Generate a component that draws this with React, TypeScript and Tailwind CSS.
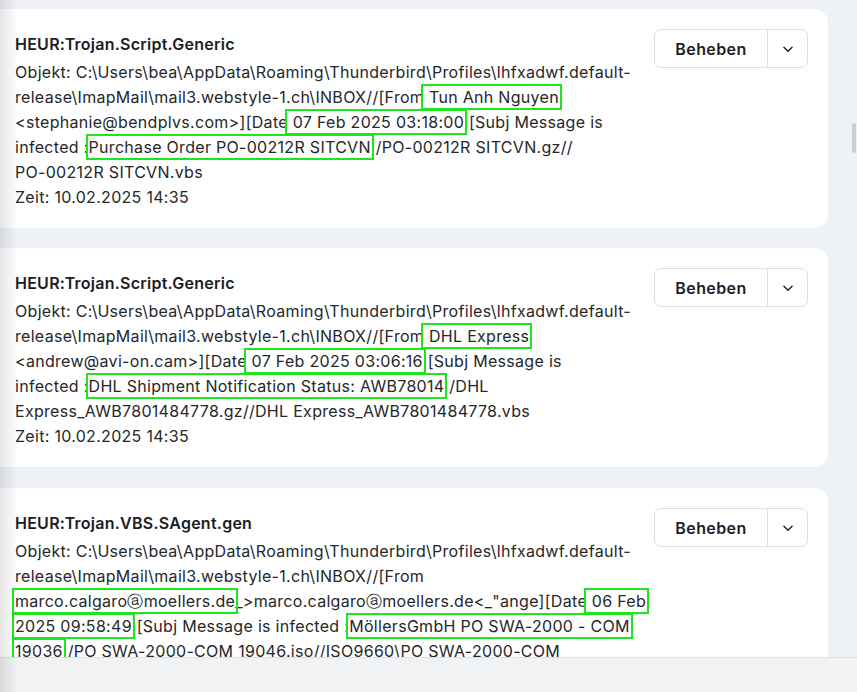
import React from "react";

const Box = ({ children }: { children: React.ReactNode }) => (
  <span className="outline-2 outline-[#1ee61e] outline-offset-[1px]">{children}</span>
);

const Chevron = () => (
  <svg width="14" height="14" viewBox="0 0 24 24" fill="none" stroke="#1f2124" strokeWidth="2.4" strokeLinecap="round" strokeLinejoin="round">
    <path d="M5 9l7 7 7-7" />
  </svg>
);

const Card = ({ title, lines, mt }: { title: string; lines: React.ReactNode[]; mt: string }) => (
  <div className={`${mt} w-[828px] bg-white rounded-r-[14px] flex`}>
    <div className="flex-1 pl-[15px] pt-[23px] pb-[18px]">
      <div className="text-[16px] leading-[24px] font-semibold tracking-[0.25px] text-[#1c1d1f]">{title}</div>
      <div className="mt-[4px] text-[16px] leading-[25px] tracking-[0.3px] text-[#25272a]">
        {lines.map((l, i) => (
          <div key={i} className="whitespace-nowrap">{l}</div>
        ))}
      </div>
    </div>
    <div className="pt-[20px] pr-[20px]">
      <div className="flex h-[39px] w-[154px] border border-[#dcdfe4] rounded-[7px]">
        <div className="w-[113px] flex items-center justify-center text-[16px] font-semibold tracking-[0.4px] text-[#1c1d1f] border-r border-[#dcdfe4]">
          Beheben
        </div>
        <div className="flex-1 flex items-center justify-center">
          <Chevron />
        </div>
      </div>
    </div>
  </div>
);

const objekt = "Objekt: C:\\Users\\bea\\AppData\\Roaming\\Thunderbird\\Profiles\\lhfxadwf.default-";
const release = "release\\ImapMail\\mail3.webstyle-1.ch\\INBOX//[From";

export default function App() {
  return (
    <div
      className="relative w-[857px] h-[692px] overflow-hidden bg-[#eef1f6] flex flex-col"
      style={{ fontFamily: "Inter, 'Noto Sans', sans-serif" }}
    >
      <div className="flex-1 flex overflow-hidden">
        <div className="w-[828px] pt-[9px]">
          <Card
            mt="mt-0"
            title="HEUR:Trojan.Script.Generic"
            lines={[
              objekt,
              <>{release}<Box> Tun Anh Nguyen  </Box></>,
              <>{"<stephanie@bendplvs.com>][Date"}<Box> 07 Feb 2025 03:18:00</Box>{" [Subj Message is"}</>,
              <>{"infected :"}<Box>Purchase Order PO-00212R SITCVN</Box>{" /PO-00212R SITCVN.gz//"}</>,
              "PO-00212R SITCVN.vbs",
              "Zeit: 10.02.2025 14:35",
            ]}
          />
          <Card
            mt="mt-[20px]"
            title="HEUR:Trojan.Script.Generic"
            lines={[
              objekt,
              <>{release}<Box> DHL Express  </Box></>,
              <>{"<andrew@avi-on.cam>][Date"}<Box> 07 Feb 2025 03:06:16</Box>{" [Subj Message is"}</>,
              <>{"infected :"}<Box>DHL Shipment Notification Status: AWB78014</Box>{" /DHL"}</>,
              "Express_AWB7801484778.gz//DHL Express_AWB7801484778.vbs",
              "Zeit: 10.02.2025 14:35",
            ]}
          />
          <Card
            mt="mt-[21px]"
            title="HEUR:Trojan.VBS.SAgent.gen"
            lines={[
              objekt,
              release,
              <><Box>marco.calgaro{"\u24D0"}moellers.de</Box>{"_>marco.calgaro\u24D0moellers.de<_\"ange][Date"}<Box> 06 Feb </Box></>,
              <><Box>2025 09:58:49</Box>{" [Subj Message is infected :"}<Box>MöllersGmbH PO SWA-2000 - COM </Box></>,
              <><Box>19036</Box>{" /PO SWA-2000-COM 19046.iso//ISO9660\\PO SWA-2000-COM"}</>,
            ]}
          />
        </div>
        <div className="flex-1 flex justify-end pr-[1px] pt-[123px]">
          <div className="w-[4px] h-[30px] rounded-full bg-[#c9cfd8]" />
        </div>
      </div>
      <div className="h-[35px] shrink-0 bg-[#f0f2f4] border-t border-[#dde1e6]" />
      <div className="absolute left-0 top-0 bottom-0 w-[18px] bg-gradient-to-r from-black/10 to-transparent pointer-events-none" />
    </div>
  );
}
